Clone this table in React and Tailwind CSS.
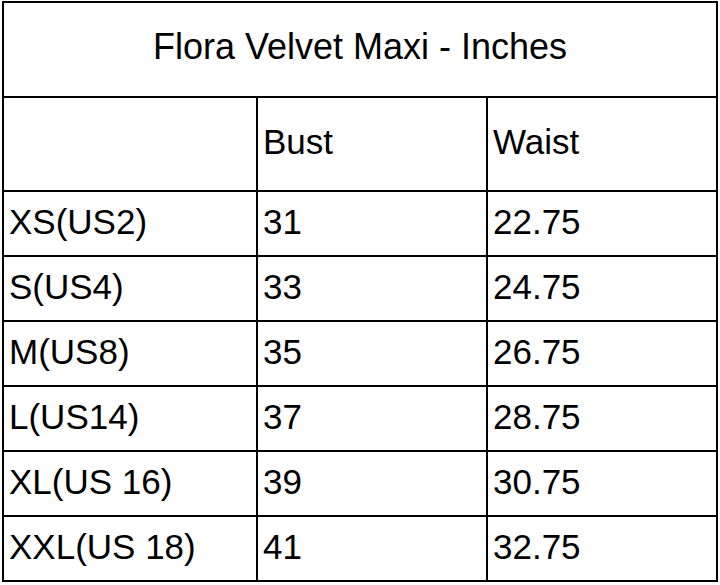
const rows = [
  ['XS(US2)', '31', '22.75'],
  ['S(US4)', '33', '24.75'],
  ['M(US8)', '35', '26.75'],
  ['L(US14)', '37', '28.75'],
  ['XL(US 16)', '39', '30.75'],
  ['XXL(US 18)', '41', '32.75'],
];

const Cell = ({ children }) => (
  <div className="bg-white flex items-center pl-[5px] pb-[4px] h-[63px]">{children}</div>
);

export default function App() {
  return (
    <div className="w-[720px] h-[585px] bg-white pt-[1px] pl-[2px] text-black font-['Liberation_Sans',Arial,sans-serif] text-[35px] leading-none">
      <div className="w-[716px] bg-black p-[2px] grid grid-cols-[252px_228px_228px] gap-[2px]">
        <div className="col-span-3 bg-white h-[93px] flex items-center justify-center pb-[6px] text-[36px]">
          Flora Velvet Maxi - Inches
        </div>
        <div className="bg-white h-[92px]" />
        <div className="bg-white h-[92px] flex items-center pl-[5px] pb-[6px]">Bust</div>
        <div className="bg-white h-[92px] flex items-center pl-[5px] pb-[6px]">Waist</div>
        {rows.map((r) => (
          <>
            <Cell key={r[0] + 'a'}>{r[0]}</Cell>
            <Cell key={r[0] + 'b'}>{r[1]}</Cell>
            <Cell key={r[0] + 'c'}>{r[2]}</Cell>
          </>
        ))}
      </div>
    </div>
  );
}
